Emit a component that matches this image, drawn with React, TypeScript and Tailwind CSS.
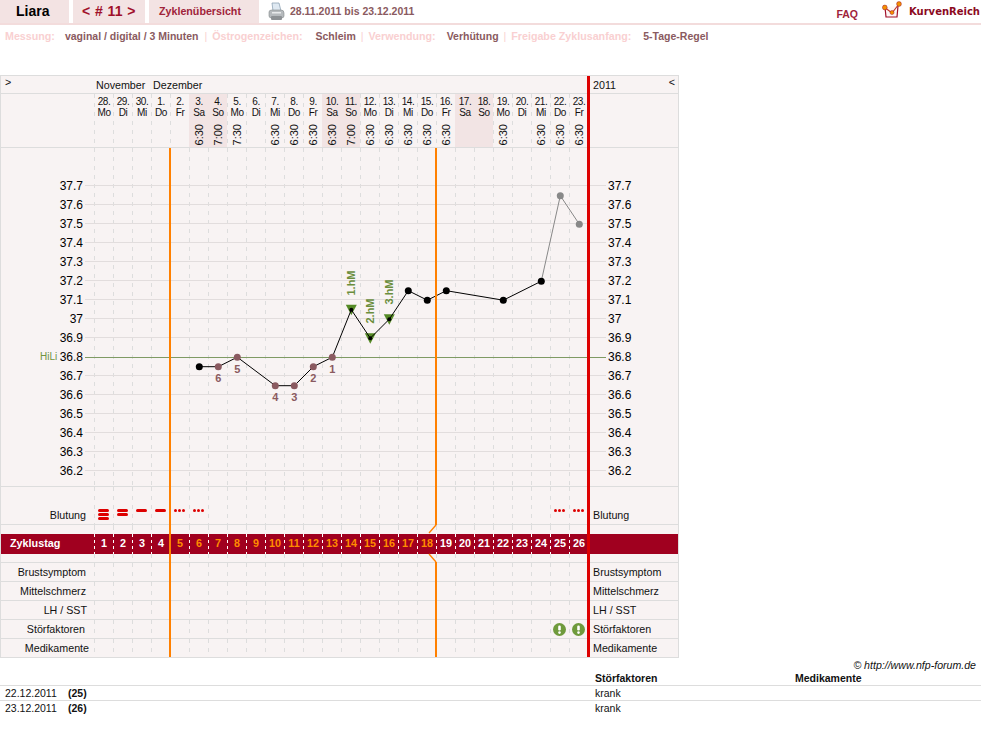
const dash = "bg-[linear-gradient(#dddddd_50%,transparent_50%)] bg-[length:1px_9px] bg-repeat-y";
const dashWhite = "bg-[linear-gradient(#ffffff_50%,transparent_50%)] bg-[length:1px_6px] bg-repeat-y";
const rowGrid = "grid grid-cols-[93px_repeat(26,19px)_1fr]";

const days = [
  ["28.", "Mo", ""], ["29.", "Di", ""], ["30.", "Mi", ""], ["1.", "Do", ""], ["2.", "Fr", ""],
  ["3.", "Sa", "6:30"], ["4.", "So", "7:00"], ["5.", "Mo", "7:30"], ["6.", "Di", ""], ["7.", "Mi", "6:30"],
  ["8.", "Do", "6:30"], ["9.", "Fr", "6:30"], ["10.", "Sa", "6:30"], ["11.", "So", "7:00"], ["12.", "Mo", "6:30"],
  ["13.", "Di", "6:30"], ["14.", "Mi", "6:30"], ["15.", "Do", "6:30"], ["16.", "Fr", "6:30"], ["17.", "Sa", ""],
  ["18.", "So", ""], ["19.", "Mo", "6:30"], ["20.", "Di", ""], ["21.", "Mi", "6:30"], ["22.", "Do", "6:30"], ["23.", "Fr", "6:30"],
];

const yOf = (t: number) => 209.2 - (t - 36.8) * 190;
const xOf = (i: number) => 103.3 + 19 * i;

const points: [number, number, string][] = [
  [5, 36.75, "#000000"], [6, 36.75, "#8a5a60"], [7, 36.8, "#8a5a60"], [9, 36.65, "#8a5a60"], [10, 36.65, "#8a5a60"],
  [11, 36.75, "#8a5a60"], [12, 36.8, "#8a5a60"], [13, 37.05, "#000000"], [14, 36.9, "#000000"], [15, 37.0, "#000000"],
  [16, 37.15, "#000000"], [17, 37.1, "#000000"], [18, 37.15, "#000000"], [21, 37.1, "#000000"], [23, 37.2, "#000000"],
  [24, 37.65, "#888888"], [25, 37.5, "#888888"],
];
const temps = ["37.7", "37.6", "37.5", "37.4", "37.3", "37.2", "37.1", "37", "36.9", "36.8", "36.7", "36.6", "36.5", "36.4", "36.3", "36.2"];
const lowLabels: [number, number, string][] = [
  [6, 234, "6"], [7, 225, "5"], [9, 253, "4"], [10, 253, "3"], [11, 234, "2"], [12, 225, "1"],
];
const hm: [number, number, string][] = [[13, 135, "1.hM"], [14, 163, "2.hM"], [15, 144, "3.hM"]];

function Chart() {
  return (
    <svg width="678" height="338" className="block" fontFamily="'Liberation Sans', Arial, sans-serif">
      {days.map((_, i) => (
        <line key={i} x1={93.5 + 19 * i} x2={93.5 + 19 * i} y1="0" y2="338" stroke="#dddddd" strokeDasharray="4 5" />
      ))}
      {temps.map((t, k) => {
        const y = 37.5 + 19 * k;
        return (
          <g key={t}>
            {t !== "36.8" && <line x1="84" x2="605" y1={y} y2={y} stroke="#e2dddd" />}
            <text x="82" y={y + 4} fontSize="12" textAnchor="end" fill="#000">{t}</text>
            <text x="607" y={y + 4} fontSize="12" fill="#000">{t}</text>
          </g>
        );
      })}
      <line x1="84" x2="605" y1="209.5" y2="209.5" stroke="#7f9a63" />
      <text x="39" y="212" fontSize="10" fill="#6f9440">HiLi</text>
      {hm.map(([i, cy, label]) => (
        <text key={label} fontSize="11" fontWeight="bold" fill="#6b8e3d" textAnchor="middle" transform={`translate(${xOf(i) + 4},${cy}) rotate(-90)`}>{label}</text>
      ))}
      {[13, 14, 15].map((i) => {
        const t = points.find((p) => p[0] === i)![1];
        const y = yOf(t);
        return <polygon key={i} points={`${xOf(i) - 5.5},${y - 5} ${xOf(i) + 5.5},${y - 5} ${xOf(i)},${y + 5.5}`} fill="#558a26" />;
      })}
      <polyline points={points.slice(0, 15).map(([i, t]) => `${xOf(i)},${yOf(t)}`).join(" ")} fill="none" stroke="#000" />
      <polyline points={points.slice(14).map(([i, t]) => `${xOf(i)},${yOf(t)}`).join(" ")} fill="none" stroke="#888888" />
      {points.map(([i, t, c]) => (
        <circle key={i} cx={xOf(i)} cy={yOf(t)} r={[13, 14, 15].includes(i) ? 2 : 3.5} fill={c} />
      ))}
      {lowLabels.map(([i, y, label]) => (
        <text key={label} x={xOf(i)} y={y} fontSize="11" fontWeight="bold" fill="#8a5a60" textAnchor="middle">{label}</text>
      ))}
    </svg>
  );
}

function Bars({ n }: { n: number }) {
  return (
    <div className="flex flex-col items-center gap-[1px] pt-[22px]">
      {Array.from({ length: n }).map((_, i) => (
        <span key={i} className="block h-[3px] w-[11px] rounded-full bg-[#dd0000]" />
      ))}
    </div>
  );
}

function Dots() {
  return (
    <div className="flex justify-center gap-[1px] pt-[22px]">
      <span className="block size-[3px] rounded-full bg-[#dd0000]" />
      <span className="block size-[3px] rounded-full bg-[#dd0000]" />
      <span className="block size-[3px] rounded-full bg-[#dd0000]" />
    </div>
  );
}

function Alert() {
  return (
    <svg width="13" height="13" viewBox="0 0 13 13" className="block">
      <circle cx="6.5" cy="6.5" r="6.5" fill="#6f9a3c" />
      <rect x="5.2" y="2.5" width="2.6" height="5" rx="1.2" fill="#fff" />
      <circle cx="6.5" cy="9.6" r="1.3" fill="#fff" />
    </svg>
  );
}

function Row({ label, pad = "pr-[8px]", cells }: { label: string; pad?: string; cells?: Record<number, React.ReactNode> }) {
  return (
    <div className={`${rowGrid} h-[19px] border-b border-[#dddddd] text-[10.7px] leading-[18px] text-[#111]`}>
      <div className={`${pad} text-right`}>{label}</div>
      {days.map((_, i) => (
        <div key={i} className={`${dash} flex items-center justify-center`}>{cells?.[i]}</div>
      ))}
      <div className="pl-[5px]">{label}</div>
    </div>
  );
}

function GapRow({ height }: { height: string }) {
  return (
    <div className={`${rowGrid} ${height}`}>
      <div />
      {days.map((_, i) => <div key={i} className={dash} />)}
      <div />
    </div>
  );
}

function Logo() {
  return (
    <svg width="20" height="19" viewBox="0 0 20 19" className="block">
      <path d="M3 6 L4 16 L15 16 L16 5" fill="#fdf6f6" stroke="#a0102a" strokeWidth="1.2" />
      <path d="M2 6 L10 12 L17 3" fill="none" stroke="#c0392b" strokeWidth="1.2" />
      <circle cx="2.8" cy="6.5" r="2.4" fill="#f39200" stroke="#a0102a" strokeWidth="0.5" />
      <circle cx="10" cy="11.5" r="2" fill="#f39200" stroke="#a0102a" strokeWidth="0.5" />
      <circle cx="17" cy="3" r="2.4" fill="#f39200" stroke="#a0102a" strokeWidth="0.5" />
    </svg>
  );
}

function PrinterIcon() {
  return (
    <svg width="17" height="19" viewBox="0 0 17 19" className="block">
      <path d="M4 1 L11 1 L13 9 L5 9 Z" fill="#dfe9f2" stroke="#8fa3b5" strokeWidth="0.8" />
      <path d="M1 10 Q1 8 4 8 L13 8 Q16 8 16 11 L16 14 Q16 16 13 16 L4 16 Q1 16 1 14 Z" fill="#b6babd" stroke="#85898c" strokeWidth="0.6" />
      <rect x="3" y="14" width="11" height="4" rx="1" fill="#8d9194" />
      <rect x="4" y="10" width="9" height="1.5" fill="#e8eaeb" />
    </svg>
  );
}

export default function App() {
  return (
    <div className="min-h-screen w-[981px] bg-white font-['Liberation_Sans',Arial,sans-serif]">
      {/* header */}
      <div className="flex h-[25px] items-stretch border-b-2 border-[#f3dcdc]">
        <div className="flex w-[69px] items-center bg-[#f3e3e3] pl-[16px] text-[14px] font-bold text-black">Liara</div>
        <div className="ml-[4px] flex w-[72px] items-center justify-center bg-[#f3e3e3] text-[14px] font-bold tracking-[0.4px] text-[#a0102a]">{"< # 11 >"}</div>
        <div className="ml-[4px] flex w-[110px] items-center bg-[#f3e3e3] pl-[10px] text-[10.7px] font-bold text-[#a0233a]">Zyklenübersicht</div>
        <div className="ml-[9px] flex items-center"><PrinterIcon /></div>
        <div className="ml-[5px] flex items-center text-[10.5px] font-bold text-[#8a5a60]">28.11.2011 bis 23.12.2011</div>
        <div className="ml-auto flex items-end text-[10.5px] font-bold text-[#a0233a]">FAQ</div>
        <div className="ml-[24px] flex items-start pt-[1px]"><Logo /></div>
        <div className="ml-[7px] pr-[1px] pt-[5px] font-['DejaVu_Sans',sans-serif] text-[10px] font-bold leading-[14px] text-[#8b0a1e]">KurvenReich</div>
      </div>

      {/* settings line */}
      <div className="flex h-[22px] items-center pl-[5px] text-[10.5px] font-bold leading-none text-[#8a5a60]">
        <span className="text-[10.7px] text-[#f9d0d1]">Messung:</span>
        <span className="ml-[10px]">vaginal / digital / 3 Minuten</span>
        <span className="ml-[6px] font-normal text-[#f9d0d1]">|</span>
        <span className="ml-[5px] text-[10.7px] text-[#f9d0d1]">Östrogenzeichen:</span>
        <span className="ml-[13px]">Schleim</span>
        <span className="ml-[5px] font-normal text-[#f9d0d1]">|</span>
        <span className="ml-[5px] text-[10.7px] text-[#f9d0d1]">Verwendung:</span>
        <span className="ml-[11px]">Verhütung</span>
        <span className="ml-[5px] font-normal text-[#f9d0d1]">|</span>
        <span className="ml-[5px] text-[10.7px] text-[#f9d0d1]">Freigabe Zyklusanfang:</span>
        <span className="ml-[12px]">5-Tage-Regel</span>
      </div>

      {/* chart table */}
      <div className="relative mt-[28px] w-[679px] border border-b-0 border-[#dddddd] bg-[#f8f3f3]">
        <div className="flex h-[18px] border-b border-[#dddddd] text-[10.7px] leading-[18px] text-[#111]">
          <div className="w-[95px] pl-[4px] leading-[13px]">{">"}</div>
          <div className="w-[57px]">November</div>
          <div className="w-[435px]">Dezember</div>
          <div className="flex-1 pl-[5px]">2011</div>
          <div className="pr-[3px] leading-[13px]">{"<"}</div>
        </div>

        <div className={`${rowGrid} h-[54px] border-b border-[#dddddd] text-[10px] leading-[11px] text-[#111]`}>
          <div />
          {days.map(([date, wd, time], i) => {
            const weekend = wd === "Sa" || wd === "So";
            return (
              <div key={i} className={`flex flex-col items-center pl-[1px] pt-[2px] ${weekend ? "bg-[#f2e4e4]" : dash}`}>
                <span className="tracking-[-0.4px]">{date}</span>
                <span className="tracking-[-0.4px]">{wd}</span>
                {time && (
                  <span className="mt-[6px] rotate-180 text-[11px] leading-[14px] [writing-mode:vertical-rl]">{time}</span>
                )}
              </div>
            );
          })}
          <div />
        </div>

        <div className="h-[339px] border-b border-[#dddddd]"><Chart /></div>

        <div className={`${rowGrid} h-[38px] border-b border-[#dddddd] text-[10.7px] text-[#111]`}>
          <div className="pr-[8px] pt-[20px] text-right">Blutung</div>
          {days.map((_, i) => (
            <div key={i} className={dash}>
              {i === 0 && <Bars n={3} />}
              {i === 1 && <Bars n={2} />}
              {(i === 2 || i === 3) && <Bars n={1} />}
              {(i === 4 || i === 5 || i === 24 || i === 25) && <Dots />}
            </div>
          ))}
          <div className="pl-[5px] pt-[20px]">Blutung</div>
        </div>

        <GapRow height="h-[9px]" />

        <div className={`${rowGrid} h-[20px] bg-[#a0001f] text-[10.8px] font-bold leading-[19px] text-white`}>
          <div className="pl-[9px]">Zyklustag</div>
          {days.map((_, i) => (
            <div key={i} className={`${dashWhite} pl-[1px] text-center ${i >= 4 && i <= 17 ? "text-[#ff8c00]" : ""}`}>{i + 1}</div>
          ))}
          <div />
        </div>

        <div className="border-b border-[#dddddd]"><GapRow height="h-[8px]" /></div>

        <Row label="Brustsymptom" />
        <Row label="Mittelschmerz" />
        <Row label="LH / SST" pad="pr-[7px]" />
        <Row label="Störfaktoren" pad="pr-[9px]" cells={{ 24: <Alert />, 25: <Alert /> }} />
        <Row label="Medikamente" pad="pr-[5px]" />

        {/* orange and red markers on top of the rows */}
        <svg width="600" height="581" className="pointer-events-none absolute left-0 top-0">
          <line x1="169" x2="169" y1="72" y2="581" stroke="#ff8000" strokeWidth="2" />
          <line x1="435" x2="435" y1="72" y2="449" stroke="#ff8000" strokeWidth="2" />
          <line x1="435" x2="428" y1="449" y2="457" stroke="#ff8000" strokeWidth="1.3" />
          <line x1="428" x2="435" y1="478" y2="486" stroke="#ff8000" strokeWidth="1.3" />
          <line x1="435" x2="435" y1="486" y2="581" stroke="#ff8000" strokeWidth="2" />
          <line x1="587.5" x2="587.5" y1="0" y2="581" stroke="#dd0000" strokeWidth="3" />
        </svg>
      </div>

      {/* footer */}
      <div className="h-[13px] pr-[5px] text-right text-[10.6px] italic leading-[14px] text-[#111]">© http://www.nfp-forum.de</div>
      <div className="grid h-[15px] grid-cols-[595px_200px_1fr] border-b border-[#dddddd] text-[10.5px] font-bold leading-[14px] text-[#111]">
        <div />
        <div>Störfaktoren</div>
        <div>Medikamente</div>
      </div>
      {[["22.12.2011", "(25)"], ["23.12.2011", "(26)"]].map(([date, n], k) => (
        <div key={date} className={`grid h-[15px] grid-cols-[63px_527px_1fr] pl-[5px] text-[10.5px] leading-[14px] text-[#111] ${k === 0 ? "border-b border-[#dddddd]" : ""}`}>
          <div>{date}</div>
          <div className="font-bold">{n}</div>
          <div>krank</div>
        </div>
      ))}
    </div>
  );
}
